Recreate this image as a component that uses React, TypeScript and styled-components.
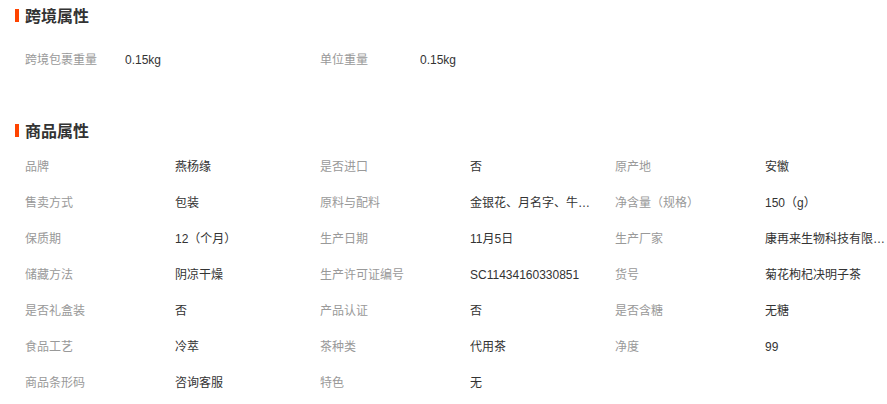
import React from "react";
import styled, { createGlobalStyle } from "styled-components";

const GlobalStyle = createGlobalStyle`
  body {
    margin: 0;
    background: #fff;
    font-family: "Liberation Sans", "Noto Sans CJK SC", sans-serif;
  }
`;

type Attr = [string, string];

const crossBorder: Attr[] = [
  ["跨境包裹重量", "0.15kg"],
  ["单位重量", "0.15kg"],
];

const productAttrs: Attr[] = [
  ["品牌", "燕杨缘"],
  ["是否进口", "否"],
  ["原产地", "安徽"],
  ["售卖方式", "包装"],
  ["原料与配料", "金银花、月名字、牛蒡根、菊花"],
  ["净含量（规格）", "150（g）"],
  ["保质期", "12（个月）"],
  ["生产日期", "11月5日"],
  ["生产厂家", "康再来生物科技有限公司"],
  ["储藏方法", "阴凉干燥"],
  ["生产许可证编号", "SC11434160330851"],
  ["货号", "菊花枸杞决明子茶"],
  ["是否礼盒装", "否"],
  ["产品认证", "否"],
  ["是否含糖", "无糖"],
  ["食品工艺", "冷萃"],
  ["茶种类", "代用茶"],
  ["净度", "99"],
  ["商品条形码", "咨询客服"],
  ["特色", "无"],
];

const Page = styled.div`
  width: 887px;
  padding-left: 15px;
  box-sizing: border-box;
`;

const Section = styled.section<{ $gap: number }>`
  margin-bottom: ${(p) => p.$gap}px;
`;

const Title = styled.h3<{ $after: number }>`
  display: flex;
  align-items: center;
  height: 30px;
  margin: 0 0 ${(p) => p.$after}px;
  font-size: 16px;
  font-weight: 700;
  color: #333;
`;

const Marker = styled.span`
  width: 4px;
  height: 13px;
  margin-right: 6px;
  background: #ff4400;
`;

const Grid = styled.div<{ $label: number; $value: number; $cols: number }>`
  display: grid;
  padding-left: 10px;
  grid-template-columns: repeat(
    ${(p) => p.$cols},
    ${(p) => p.$label}px ${(p) => p.$value}px
  );
  grid-auto-rows: 36px;
  font-size: 12px;
  line-height: 36px;
`;

const Label = styled.div`
  color: #999;
  white-space: nowrap;
`;

const Value = styled.div`
  max-width: 125px;
  color: #333;
  white-space: nowrap;
  overflow: hidden;
  text-overflow: ellipsis;
`;

const AttrGrid = ({
  items,
  cols,
  label,
  value,
}: {
  items: Attr[];
  cols: number;
  label: number;
  value: number;
}) => (
  <Grid $cols={cols} $label={label} $value={value}>
    {items.map(([k, v]) => (
      <React.Fragment key={k}>
        <Label>{k}</Label>
        <Value title={v}>{v}</Value>
      </React.Fragment>
    ))}
  </Grid>
);

export default function App() {
  return (
    <Page>
      <GlobalStyle />
      <Section $gap={37}>
        <Title $after={12}>
          <Marker />
          跨境属性
        </Title>
        <AttrGrid items={crossBorder} cols={2} label={100} value={195} />
      </Section>
      <Section $gap={0}>
        <Title $after={4}>
          <Marker />
          商品属性
        </Title>
        <AttrGrid items={productAttrs} cols={3} label={150} value={145} />
      </Section>
    </Page>
  );
}
